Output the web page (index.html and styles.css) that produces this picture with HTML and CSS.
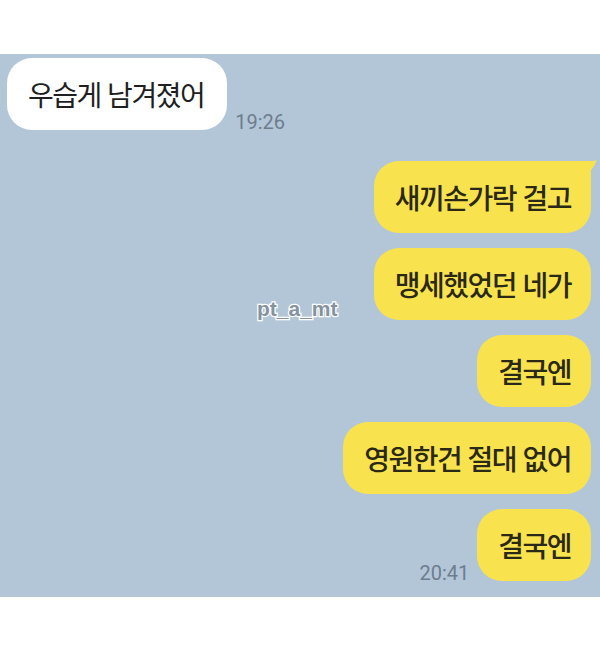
FILE: index.html
```html
<!DOCTYPE html>
<html lang="ko">
<head>
    <meta charset="UTF-8">
    <meta name="viewport" content="width=device-width, initial-scale=1.0">
    <title>채팅</title>
    <link rel="stylesheet" href="styles.css">
</head>
<body>
    <main class="chat">
        <div class="row them">
            <div class="bubble white">우습게 남겨졌어</div>
            <span class="time">19:26</span>
        </div>

        <div class="group">
            <div class="row me">
                <div class="bubble yellow tail">
                    새끼손가락 걸고
                    <svg class="tail-mark" width="12" height="16" viewBox="0 0 12 16">
                        <path d="M0 0 L8 0 Q10 0 11.5 -1.5 Q10.5 4 6 9 Q3 12 0 16 Z" fill="#f8e34e"/>
                    </svg>
                </div>
            </div>
            <div class="row me">
                <div class="bubble yellow">맹세했었던 네가</div>
            </div>
            <div class="row me">
                <div class="bubble yellow">결국엔</div>
            </div>
            <div class="row me">
                <div class="bubble yellow">영원한건 절대 없어</div>
            </div>
            <div class="row me">
                <span class="time">20:41</span>
                <div class="bubble yellow">결국엔</div>
            </div>
        </div>

        <div class="watermark">pt_a_mt</div>
    </main>
</body>
</html>
```

FILE: styles.css
```css
:root {
    --chat-bg: #b3c6d8;
    --yellow: #f8e34e;
    --time-color: #6d7d8d;
}

* {
    box-sizing: border-box;
    margin: 0;
    padding: 0;
}

body {
    background: #fff;
    font-family: "Noto Sans CJK KR", sans-serif;
    height: 647px;
    overflow: hidden;
}

/* 채팅 영역 */
.chat {
    position: relative;
    margin-top: 54px;
    height: 543px;
    background: var(--chat-bg);
    padding: 4px 9px 0 7px;
}

.row {
    display: flex;
    align-items: flex-end;
    gap: 8px;
}

.row.me {
    justify-content: flex-end;
}

.row.me + .row.me {
    margin-top: 15px;
}

.group {
    margin-top: 31px;
}

/* 말풍선 */
.bubble {
    position: relative;
    height: 72px;
    display: flex;
    align-items: center;
    padding: 0 20px 0 21px;
    border-radius: 25px;
    font-size: 28px;
    font-weight: 500;
    letter-spacing: -1.5px;
    color: #1f1f1f;
}

.bubble.white {
    background: #fff;
    font-weight: 400;
    padding-right: 23px;
}

.bubble.yellow {
    background: var(--yellow);
    color: #2a2816;
}

.bubble.tail {
    border-top-right-radius: 0;
}

.tail-mark {
    position: absolute;
    top: 0;
    right: -6px;
    overflow: visible;
}

.time {
    font-family: Roboto, sans-serif;
    font-size: 20px;
    line-height: 20px;
    color: var(--time-color);
    margin-bottom: -2px;
}

/* 워터마크 */
.watermark {
    position: absolute;
    left: 257px;
    top: 243px;
    font-family: "Liberation Sans", sans-serif;
    font-weight: bold;
    font-size: 21px;
    color: #85929f;
    -webkit-text-stroke: 2.5px #fff;
    paint-order: stroke fill;
}
```
